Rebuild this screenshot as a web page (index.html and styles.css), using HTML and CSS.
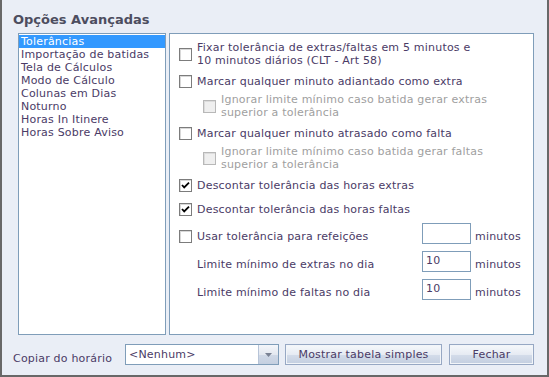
FILE: index.html
```html
<!DOCTYPE html>
<html lang="pt">
<head>
  <meta charset="UTF-8">
  <title>Opções Avançadas</title>
  <link rel="stylesheet" href="styles.css">
</head>
<body>
  <div class="window">
    <h1 class="title">Opções Avançadas</h1>
    <div class="main">
      <ul class="list">
        <li class="selected">Tolerâncias</li>
        <li>Importação de batidas</li>
        <li>Tela de Cálculos</li>
        <li>Modo de Cálculo</li>
        <li>Colunas em Dias</li>
        <li>Noturno</li>
        <li>Horas In Itinere</li>
        <li>Horas Sobre Aviso</li>
      </ul>
      <div class="panel">
        <div class="opt r1">
          <span class="box"></span>
          <span class="txt">Fixar tolerância de extras/faltas em 5 minutos e<br>10 minutos diários (CLT - Art 58)</span>
        </div>
        <div class="opt r-main">
          <span class="box"></span>
          <span class="txt">Marcar qualquer minuto adiantado como extra</span>
        </div>
        <div class="opt sub">
          <span class="box disabled"></span>
          <span class="txt">Ignorar limite mínimo caso batida gerar extras<br>superior a tolerância</span>
        </div>
        <div class="opt r-main">
          <span class="box"></span>
          <span class="txt">Marcar qualquer minuto atrasado como falta</span>
        </div>
        <div class="opt sub">
          <span class="box disabled"></span>
          <span class="txt">Ignorar limite mínimo caso batida gerar faltas<br>superior a tolerância</span>
        </div>
        <div class="opt r-main">
          <span class="box checked"><svg width="11" height="11" viewBox="0 0 11 11"><path d="M2 5 L4.2 7.4 L9 2.6" fill="none" stroke="#000" stroke-width="1.8"/></svg></span>
          <span class="txt">Descontar tolerância das horas extras</span>
        </div>
        <div class="opt r-gap">
          <span class="box checked"><svg width="11" height="11" viewBox="0 0 11 11"><path d="M2 5 L4.2 7.4 L9 2.6" fill="none" stroke="#000" stroke-width="1.8"/></svg></span>
          <span class="txt">Descontar tolerância das horas faltas</span>
        </div>
        <div class="field">
          <div class="field-label opt">
            <span class="box"></span>
            <span class="txt">Usar tolerância para refeições</span>
          </div>
          <input class="num" type="text" value="">
          <span class="unit">minutos</span>
        </div>
        <div class="field">
          <div class="field-label indent">Limite mínimo de extras no dia</div>
          <input class="num" type="text" value="10">
          <span class="unit">minutos</span>
        </div>
        <div class="field">
          <div class="field-label indent">Limite mínimo de faltas no dia</div>
          <input class="num" type="text" value="10">
          <span class="unit">minutos</span>
        </div>
      </div>
    </div>
    <div class="footer">
      <span class="copy-label">Copiar do horário</span>
      <div class="select">
        <span class="select-value">&lt;Nenhum&gt;</span>
        <span class="select-btn"><svg width="7" height="4" viewBox="0 0 7 4"><path d="M0 0 H7 L3.5 4 Z" fill="#7a8294"/></svg></span>
      </div>
      <button class="btn btn-wide">Mostrar tabela simples</button>
      <button class="btn btn-close">Fechar</button>
    </div>
  </div>
</body>
</html>
```

FILE: styles.css
```css
* { margin: 0; padding: 0; box-sizing: border-box; }
body {
  font-family: 'DejaVu Sans', Verdana, sans-serif;
  font-size: 11px;
  letter-spacing: 0.2px;
  color: #4a3b66;
  background: #eaeef6;
}
.window {
  height: 377px;
  border: 2px solid #686868;
  border-top: 0;
  background: #eaeef6;
  padding: 12px 13px 0 11px;
  display: flex;
  flex-direction: column;
}
.title {
  font-size: 13px;
  line-height: 16px;
  font-weight: bold;
  letter-spacing: 0;
  color: #4d4d5f;
}
.main {
  display: flex;
  gap: 3px;
  height: 302px;
  margin: 5px 0 0 5px;
}
.list {
  list-style: none;
  width: 148px;
  border: 1px solid #7f9db9;
  background: #fff;
  padding-top: 1px;
}
.list li {
  line-height: 13px;
  padding-left: 2px;
  white-space: nowrap;
}
.list li.selected { background: #3399ff; color: #fff; }
.panel {
  width: 365px;
  border: 1px solid #7f9db9;
  background: #fff;
  padding: 7px 0 0 9px;
}
.opt {
  display: flex;
  align-items: center;
  gap: 5px;
}
.txt { line-height: 13px; }
.r-main { margin-top: 8px; }
.r-gap { margin-top: 11px; }
.sub {
  margin-top: 5px;
  padding-left: 24px;
  color: #a0a0a0;
}
.box {
  width: 13px;
  height: 13px;
  flex: none;
  border: 1px solid #7c7c7c;
  background: #fff;
  box-shadow: inset 1px 1px 0 #d8d8d8;
  display: flex;
  align-items: center;
  justify-content: center;
}
.box.disabled {
  border-color: #b8b8b8;
  background: #efefef;
  box-shadow: inset 1px 1px 0 #dcdcdc;
}
.field {
  display: flex;
  align-items: flex-end;
  margin-top: 7px;
}
.field-label {
  width: 243px;
  line-height: 13px;
  margin-bottom: 1px;
}
.indent { padding-left: 18px; }
.num {
  width: 49px;
  height: 21px;
  border: 1px solid #7f9db9;
  padding: 2px 3px 4px 3px;
  font-family: inherit;
  font-size: 11px;
  line-height: 13px;
  letter-spacing: 0.2px;
  color: #4a3b66;
  outline: none;
}
.unit {
  margin-left: 4px;
  line-height: 13px;
  margin-bottom: 1px;
}
.footer {
  display: flex;
  align-items: flex-end;
  margin-top: 9px;
  height: 21px;
}
.copy-label {
  width: 112px;
  line-height: 13px;
}
.select {
  width: 154px;
  height: 21px;
  border: 1px solid #7f9db9;
  background: #fff;
  display: flex;
}
.select-value {
  flex: 1;
  padding: 3px 0 0 3px;
  line-height: 13px;
}
.select-btn {
  width: 20px;
  border-left: 1px solid #b7c4d8;
  background: linear-gradient(#f4f6fa, #e3e8f0 50%, #d0d9e7 51%, #c4cfe0);
  display: flex;
  align-items: center;
  justify-content: center;
}
.btn {
  height: 21px;
  border: 1px solid #97a8c4;
  background: linear-gradient(#f6f8fb, #e6ebf3 50%, #d4dcea 51%, #c3cee0);
  box-shadow: inset 0 0 0 1px #f2f5f9;
  font-family: inherit;
  font-size: 11px;
  letter-spacing: 0.2px;
  line-height: 13px;
  color: #4a3b66;
}
.btn-wide { width: 157px; margin-left: 6px; }
.btn-close { width: 85px; margin-left: 7px; }
```
